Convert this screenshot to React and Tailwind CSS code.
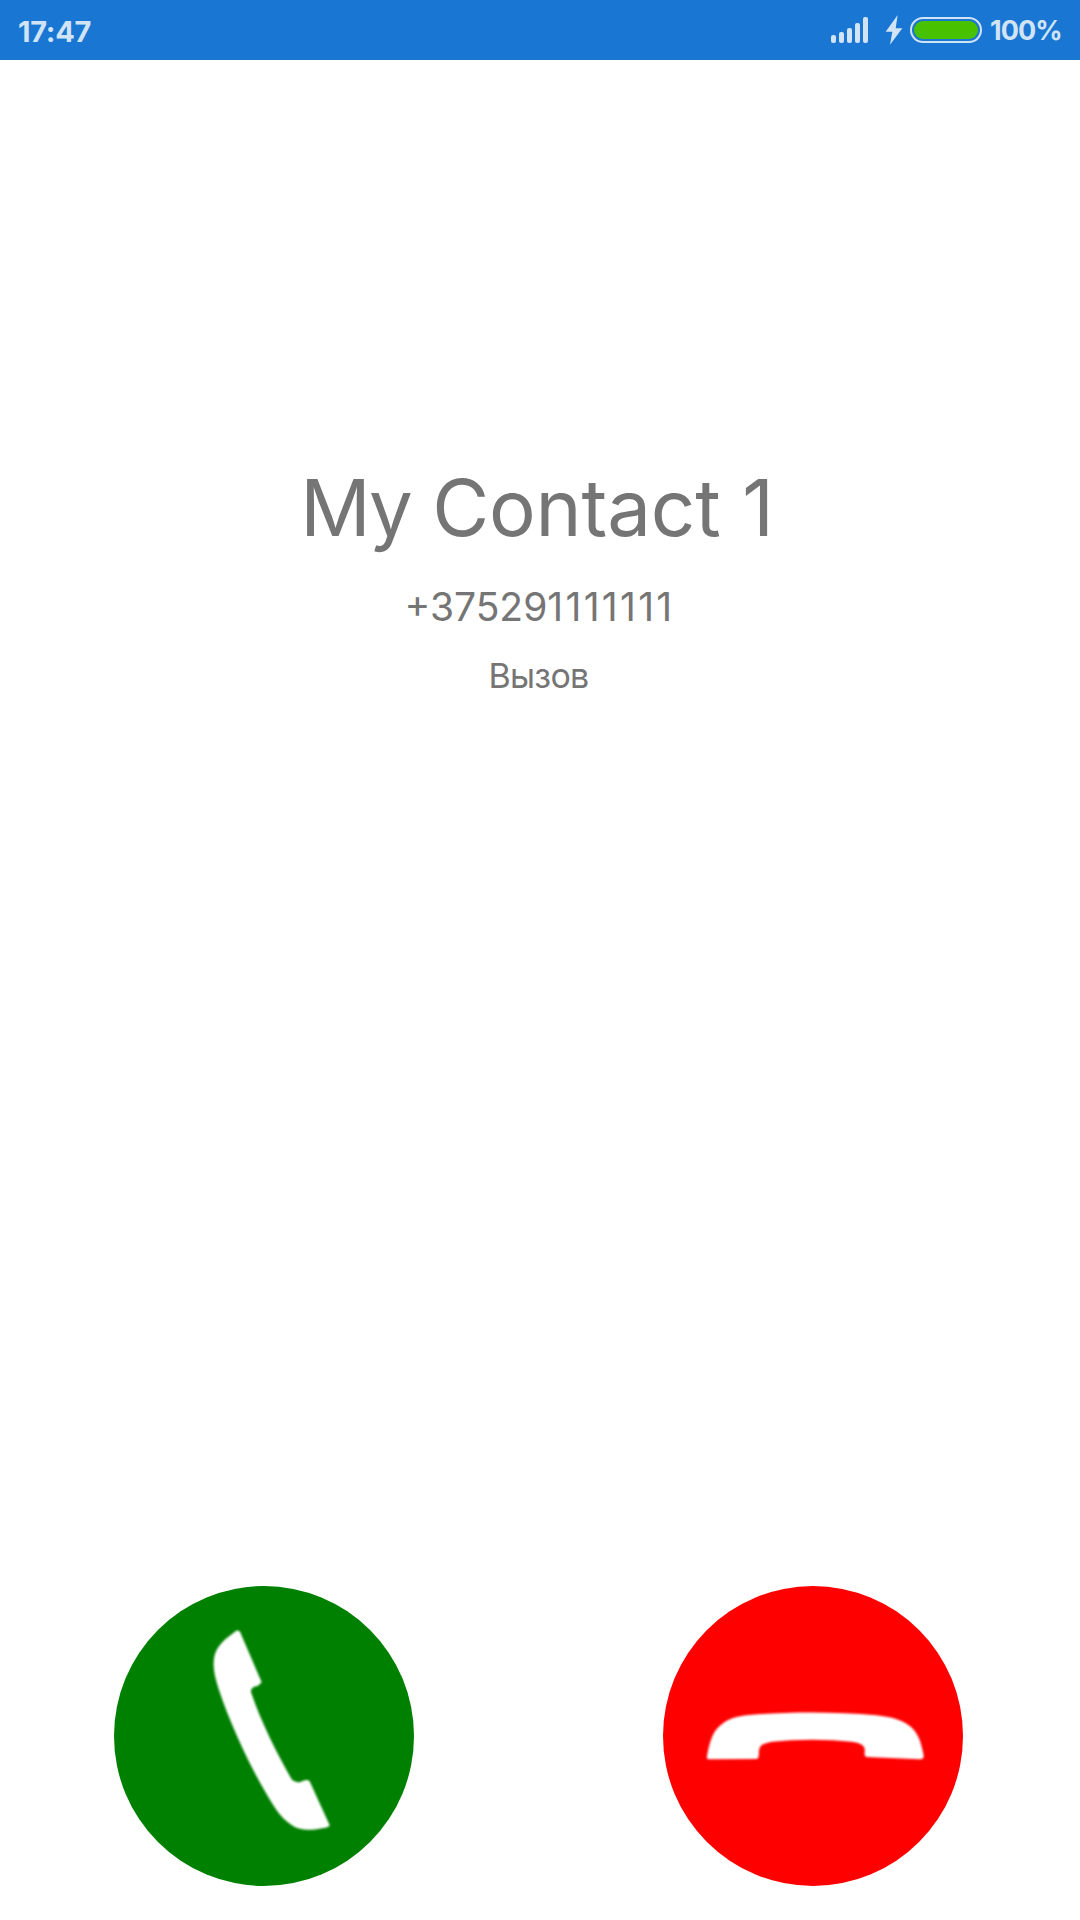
import React from 'react';

const signalBars = ['h-[8px]', 'h-[11px]', 'h-[15px]', 'h-[20px]', 'h-[26px]'];

const StatusBar = () => (
  <header className="h-[60px] bg-[#1976d2] text-[#d1e4f6] flex items-start justify-between pl-[18px] pr-[16px]">
    <span className="mt-[14px] text-[29px] leading-[35px] font-bold tracking-[-0.3px]">17:47</span>

    <div className="flex items-start">
      {/* Signal */}
      <div className="mt-[17px] h-[26px] flex items-end gap-[3px]">
        {signalBars.map((height) => (
          <div key={height} className={`w-[5px] rounded-[2px] bg-[#d1e4f6] ${height}`} />
        ))}
      </div>

      {/* Charging */}
      <svg className="mt-[15px] ml-[17px] w-[18px] h-[30px]" viewBox="0 0 54 90" fill="currentColor">
        <path d="M38 0 L2 50 H22 L15 89 L52 40 H32 Z" />
      </svg>
      <div className="mt-[17px] ml-[7px] w-[72px] h-[26px] rounded-full border-2 border-[#d1e4f6] flex items-center justify-center">
        <div className="w-[64px] h-[18px] rounded-full bg-[#48c200]" />
      </div>

      <span className="mt-[14px] ml-[8px] w-[74px] whitespace-nowrap text-[27px] leading-[34px] font-bold tracking-[-0.9px]">100%</span>
    </div>
  </header>
);

const AnswerIcon = () => (
  <svg className="w-full h-full" viewBox="42 48 900 900" fill="#fff">
    <filter id="answer-soft">
      <feGaussianBlur stdDeviation="3" />
    </filter>
    <path
      filter="url(#answer-soft)"
      d="M404 186 Q412 178 420 185 L485 337 L474 347 Q446 352 455 372 C482 452 530 550 575 628 Q586 641 603 635 Q621 626 629 634 L689 766 Q688 771 676 773 C640 780 604 784 579 768 C538 742 520 706 496 666 C446 580 390 460 357 360 C347 328 340 305 341 275 C343 238 362 216 404 186 Z"
    />
  </svg>
);

const DeclineIcon = () => (
  <svg className="w-full h-full" viewBox="40 48 900 900" fill="#fff">
    <filter id="decline-soft">
      <feGaussianBlur stdDeviation="3" />
    </filter>
    <path
      filter="url(#decline-soft)"
      d="M172 559 C181 510 190 482 217 462 C236 446 260 439 298 435 C420 425 560 425 680 436 C725 441 750 448 773 463 C806 484 814 517 822 556 Q823 568 810 568 L650 561 Q643 558 645 545 C648 525 633 519 605 515 C535 507 440 507 367 515 C338 520 330 527 328 542 L327 560 Q326 567 318 567 L178 568 Q170 568 172 559 Z"
    />
  </svg>
);

const App = () => {
  return (
    <div className="h-[1920px] w-[1080px] bg-white flex flex-col overflow-hidden font-['Inter',sans-serif]">
      <StatusBar />

      {/* Caller */}
      <main className="flex-grow flex flex-col items-center pt-[401px] text-[#757575]">
        <h1 className="pr-[6px] text-[78px] leading-[94px] tracking-[-0.2px]">
          <span className="tracking-[-2.2px]">My</span> Contact 1
        </h1>
        <p className="mt-[28px] pr-[1px] text-[39px] leading-[48px]">
          +37529<span className="tracking-[2.3px]">1111111</span>
        </p>
        <p className="mt-[24px] pr-[3px] text-[34px] leading-[42px] tracking-[-0.7px]">Вызов</p>
      </main>

      {/* Call controls */}
      <footer className="flex justify-between pl-[114px] pr-[117px] pb-[34px]">
        <button aria-label="Ответить" className="w-[300px] h-[300px] rounded-full bg-[#008000]">
          <AnswerIcon />
        </button>
        <button aria-label="Отклонить" className="w-[300px] h-[300px] rounded-full bg-[#ff0000]">
          <DeclineIcon />
        </button>
      </footer>
    </div>
  );
};

export default App;
